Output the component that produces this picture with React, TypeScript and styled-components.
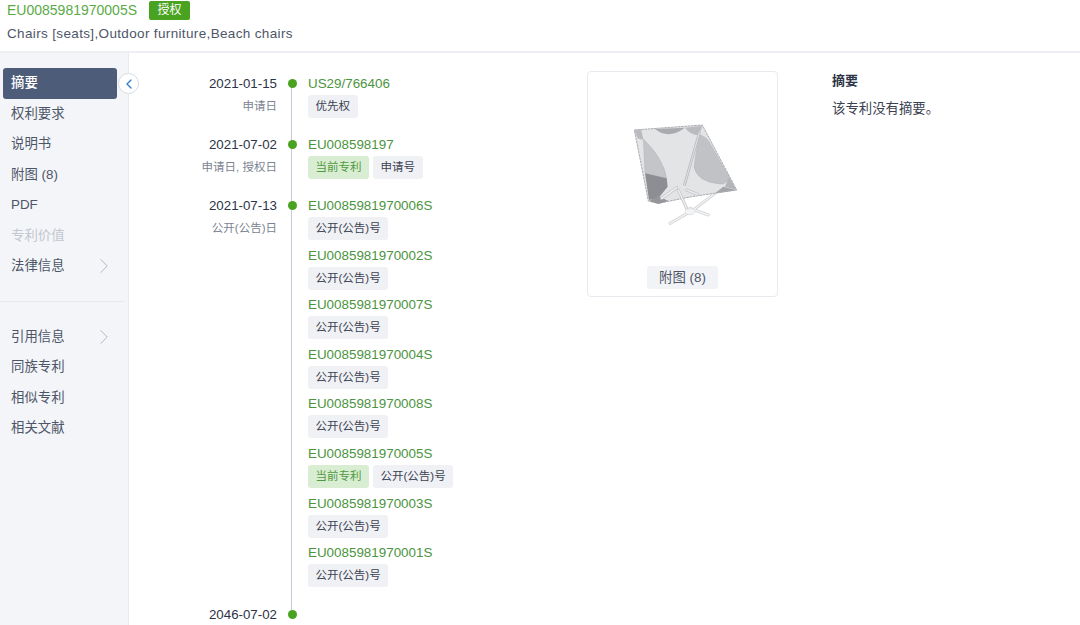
import React from "react";
import styled, { createGlobalStyle } from "styled-components";
import { ChevronLeft, ChevronRight } from "lucide-react";

const Global = createGlobalStyle`
  html, body { margin: 0; padding: 0; background: #fff; }
  body { font-family: "Liberation Sans", "Noto Sans CJK SC", sans-serif; overflow: hidden; }
  * { box-sizing: border-box; }
`;

const Page = styled.div`
  width: 1080px; height: 625px; display: flex; flex-direction: column; overflow: hidden;
`;
const Header = styled.header`
  height: 53px; flex: none; border-bottom: 2px solid #eeeff3; padding: 1px 0 0 7px;
`;
const TitleRow = styled.div`
  height: 19px; display: flex; align-items: center; gap: 12px;
`;
const PatentNo = styled.span`
  font-size: 14px; color: #5aab48; line-height: 19px;
`;
const StatusBadge = styled.span`
  width: 41px; height: 19px; background: #4aa221; color: #fff; font-size: 12px; line-height: 19px; border-radius: 2px;
  text-align: center;
`;
const Subtitle = styled.div`
  margin-top: 5px; font-size: 13.5px; line-height: 18px; color: #4d5668; letter-spacing: 0.35px;
`;
const Body = styled.div`
  flex: 1; display: flex; min-height: 0;
`;
const Sidebar = styled.nav`
  position: relative; width: 129px; flex: none; background: #f4f5f8; border-right: 1px solid #e8eaef;
  padding: 15px 11.5px 0 3px;
`;
const NavItem = styled.div<{ $active?: boolean; $disabled?: boolean }>`
  height: 30.5px; padding: 0 8px; border-radius: 3px; font-size: 13.4px; line-height: 20px;
  display: flex; align-items: center; justify-content: space-between;
  background: ${(p) => (p.$active ? "#4d5c79" : "transparent")};
  color: ${(p) => (p.$active ? "#fff" : p.$disabled ? "#c3c7d0" : "#4d5668")};
  font-weight: ${(p) => (p.$active ? 500 : 400)};
  svg { color: #a9aeb9; margin-right: -8px; }
`;
const Divider = styled.div`
  height: 1px; background: #e8eaef; margin: 19px -8px 20px -3px;
`;
const Toggle = styled.button`
  position: absolute; top: 20px; left: 118px; width: 21px; height: 21px; border-radius: 50%; padding: 0;
  background: #fff; border: 1px solid #d7dbe3; color: #2f7fd0; display: flex; align-items: center; justify-content: center;
`;
const Main = styled.main`
  flex: 1; display: flex; padding-top: 18px; min-width: 0;
`;
const Timeline = styled.section`
  position: relative; width: 458px; flex: none; padding-left: 28px; padding-top: 3px;
  &::before {
    content: ""; position: absolute; left: 162px; top: 12px; width: 1px; height: 531px; background: #c9ccd4;
  }
`;
const Group = styled.div<{ $gap?: number }>`
  display: grid; grid-template-columns: 120px 31px 1fr; margin-bottom: ${(p) => p.$gap ?? 16}px;
`;
const DateCol = styled.div`
  text-align: right;
`;
const DateText = styled.div`
  font-size: 13.3px; line-height: 20px; color: #2d3446; height: 20px;
`;
const DateType = styled.div`
  margin-top: 1px; font-size: 11.5px; line-height: 23px; color: #7c8392; white-space: nowrap;
`;
const DotCol = styled.div`
  display: flex; justify-content: center; padding: 5px 0 0 0;
`;
const Dot = styled.span`
  position: relative; width: 9px; height: 9px; border-radius: 50%; background: #4aa221; margin-left: -1px;
`;
const Items = styled.div`
  display: flex; flex-direction: column; gap: 4.6px;
`;
const Item = styled.div`
  height: 45px;
`;
const NumLink = styled.div`
  font-size: 13.4px; line-height: 20px; color: #4b9440; height: 20px;
`;
const Tags = styled.div`
  display: flex; gap: 4px; margin-top: 1px;
`;
const Tag = styled.span<{ $current?: boolean }>`
  height: 23px; padding: 0 7.5px; border-radius: 3px; font-size: 11.5px; line-height: 23px;
  background: ${(p) => (p.$current ? "#d9edd2" : "#f0f1f4")};
  color: ${(p) => (p.$current ? "#4f9a3f" : "#3a4152")};
`;
const FigureCard = styled.div`
  width: 191px; height: 226px; flex: none; border: 1px solid #e8eaef; border-radius: 4px;
  display: flex; flex-direction: column; align-items: center;
`;
const ChairSvg = styled.svg`
  width: 120px; height: 115px; margin: 43px 0 0 5px; flex: none; filter: blur(0.5px);
`;
const FigureButton = styled.div`
  margin-top: 36px; width: 71px; height: 23px; border-radius: 3px; background: #f2f3f6; color: #4d5668;
  font-size: 13.4px; line-height: 20px; display: flex; align-items: center; justify-content: center;
`;
const Abstract = styled.section`
  margin-left: 54px; padding-top: 1px;
`;
const AbstractTitle = styled.div`
  font-size: 13px; font-weight: 700; line-height: 18px; color: #2d3446;
`;
const AbstractText = styled.div`
  margin-top: 10px; font-size: 13.4px; line-height: 18px; color: #3a4152;
`;

const navTop = ["权利要求", "说明书", "附图 (8)", "PDF"];
const publications = [
  ["EU0085981970006S"],
  ["EU0085981970002S"],
  ["EU0085981970007S"],
  ["EU0085981970004S"],
  ["EU0085981970008S"],
  ["EU0085981970005S", "current"],
  ["EU0085981970003S"],
  ["EU0085981970001S"],
];

const legs = "M135 325 L205 285 M250 300 L195 280 M205 285 L270 235";
const struts = "M110 250 L155 218 M160 225 L185 280 M185 225 L218 238";

const Chair = () => (
  <ChairSvg viewBox="0 0 360 345">
    <path d={legs} stroke="#d2d4d7" strokeWidth="9" strokeLinecap="round" fill="none" />
    <path d={legs} stroke="#f2f3f4" strokeWidth="4" strokeLinecap="round" fill="none" />
    <path d="M28 45 L232 30 L335 225 L200 245 L100 265 L70 258 Z" fill="#e3e4e6" stroke="#a9abaf" strokeWidth="3" strokeDasharray="8 2" strokeLinejoin="round" />
    <path d="M90 42 Q130 75 180 38 Z" fill="#a9abaf" />
    <path d="M180 38 Q195 60 222 60 L232 32 Z" fill="#b9bbbe" />
    <path d="M28 45 L38 70 Q48 75 55 72 L48 43 Z" fill="#b9bbbe" />
    <path d="M55 72 Q115 130 125 190 L60 175 Z" fill="#c3c5c8" stroke="#a3a5a9" />
    <path d="M60 175 L125 190 L128 215 L100 250 L72 255 Z" fill="#8c8e93" />
    <path d="M72 258 L100 243 L130 258 L100 267 Z" fill="#94969a" />
    <path d="M225 60 Q245 65 255 85 L312 185 Q305 210 285 207 Q215 200 207 155 Q212 105 225 60 Z" fill="#c0c2c5" stroke="#a6a8ac" />
    <path d="M312 185 L335 225 L300 215 Z" fill="#b3b5b8" />
    <path d="M270 235 L335 226 L295 215 Z" fill="#a4a6aa" />
    <path d="M224 50 L178 212" stroke="#b5b7ba" strokeWidth="8" fill="none" />
    <path d="M224 50 L178 212" stroke="#dcdde0" strokeWidth="4" fill="none" />
    <path d={struts} stroke="#c6c8cb" strokeWidth="9" strokeLinecap="round" fill="none" />
    <path d={struts} stroke="#eff0f1" strokeWidth="4" strokeLinecap="round" fill="none" />
    <ellipse cx="195" cy="290" rx="15" ry="9" fill="#f3f4f5" stroke="#d9dadd" strokeWidth="2" />
  </ChairSvg>
);

export default function App() {
  return (
    <Page>
      <Global />
      <Header>
        <TitleRow>
          <PatentNo>EU0085981970005S</PatentNo>
          <StatusBadge>授权</StatusBadge>
        </TitleRow>
        <Subtitle>Chairs [seats],Outdoor furniture,Beach chairs</Subtitle>
      </Header>
      <Body>
        <Sidebar>
          <NavItem $active>摘要</NavItem>
          {navTop.map((n) => (
            <NavItem key={n}>{n}</NavItem>
          ))}
          <NavItem $disabled>专利价值</NavItem>
          <NavItem>
            法律信息 <ChevronRight size={26} strokeWidth={0.8} />
          </NavItem>
          <Divider />
          <NavItem>
            引用信息 <ChevronRight size={26} strokeWidth={0.8} />
          </NavItem>
          <NavItem>同族专利</NavItem>
          <NavItem>相似专利</NavItem>
          <NavItem>相关文献</NavItem>
          <Toggle aria-label="收起">
            <ChevronLeft size={16} strokeWidth={2} />
          </Toggle>
        </Sidebar>
        <Main>
          <Timeline>
            <Group>
              <DateCol>
                <DateText>2021-01-15</DateText>
                <DateType>申请日</DateType>
              </DateCol>
              <DotCol><Dot /></DotCol>
              <Items>
                <Item>
                  <NumLink>US29/766406</NumLink>
                  <Tags><Tag>优先权</Tag></Tags>
                </Item>
              </Items>
            </Group>
            <Group>
              <DateCol>
                <DateText>2021-07-02</DateText>
                <DateType>申请日, 授权日</DateType>
              </DateCol>
              <DotCol><Dot /></DotCol>
              <Items>
                <Item>
                  <NumLink>EU008598197</NumLink>
                  <Tags>
                    <Tag $current>当前专利</Tag>
                    <Tag>申请号</Tag>
                  </Tags>
                </Item>
              </Items>
            </Group>
            <Group $gap={17}>
              <DateCol>
                <DateText>2021-07-13</DateText>
                <DateType>公开(公告)日</DateType>
              </DateCol>
              <DotCol><Dot /></DotCol>
              <Items>
                {publications.map(([no, cur]) => (
                  <Item key={no}>
                    <NumLink>{no}</NumLink>
                    <Tags>
                      {cur && <Tag $current>当前专利</Tag>}
                      <Tag>公开(公告)号</Tag>
                    </Tags>
                  </Item>
                ))}
              </Items>
            </Group>
            <Group>
              <DateCol>
                <DateText>2046-07-02</DateText>
              </DateCol>
              <DotCol><Dot /></DotCol>
              <Items />
            </Group>
          </Timeline>
          <FigureCard>
            <Chair />
            <FigureButton>附图 (8)</FigureButton>
          </FigureCard>
          <Abstract>
            <AbstractTitle>摘要</AbstractTitle>
            <AbstractText>该专利没有摘要。</AbstractText>
          </Abstract>
        </Main>
      </Body>
    </Page>
  );
}
